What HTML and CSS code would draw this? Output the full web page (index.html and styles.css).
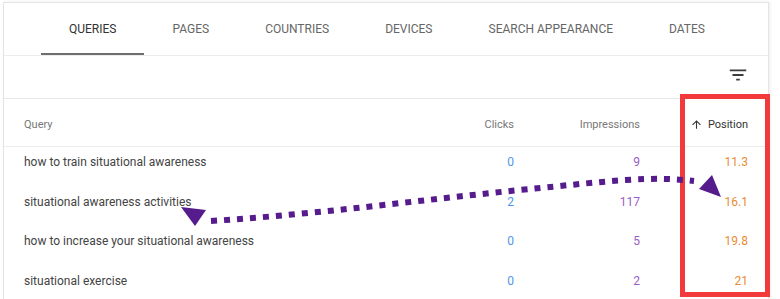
FILE: index.html
```html
<!DOCTYPE html>
<html>
<head>
<meta charset="utf-8">
<link rel="stylesheet" href="styles.css">
</head>
<body>
<div class="card">
  <div class="tabs">
    <div class="tab active">Queries</div>
    <div class="tab">Pages</div>
    <div class="tab">Countries</div>
    <div class="tab">Devices</div>
    <div class="tab">Search appearance</div>
    <div class="tab">Dates</div>
  </div>
  <div class="toolbar">
    <svg class="filter" viewBox="0 0 24 24" width="22" height="22"><path d="M10 18h4v-2h-4v2zM3 6v2h18V6H3zm3 7h12v-2H6v2z" fill="#3c3c3c"/></svg>
  </div>
  <div class="row head">
    <div class="c-query">Query</div>
    <div class="c-num">Clicks</div>
    <div class="c-num">Impressions</div>
    <div class="c-num sorted"><svg viewBox="0 0 24 24" width="13" height="13"><path d="M4 12l1.41 1.41L11 7.83V20h2V7.83l5.58 5.59L20 12l-8-8-8 8z" fill="#333"/></svg>Position</div>
  </div>
  <div class="row data">
    <div class="c-query">how to train situational awareness</div>
    <div class="c-num clicks">0</div>
    <div class="c-num impr">9</div>
    <div class="c-num pos">11.3</div>
  </div>
  <div class="row data">
    <div class="c-query">situational awareness activities</div>
    <div class="c-num clicks">2</div>
    <div class="c-num impr">117</div>
    <div class="c-num pos">16.1</div>
  </div>
  <div class="row data">
    <div class="c-query">how to increase your situational awareness</div>
    <div class="c-num clicks">0</div>
    <div class="c-num impr">5</div>
    <div class="c-num pos">19.8</div>
  </div>
  <div class="row data">
    <div class="c-query">situational exercise</div>
    <div class="c-num clicks">0</div>
    <div class="c-num impr">2</div>
    <div class="c-num pos">21</div>
  </div>
</div>
<div class="highlight"></div>
<svg class="annot" width="780" height="299" viewBox="0 0 780 299">
  <g fill="#561b8c" stroke="none">
    <polygon points="181,207 206,210 195,226"/>
    <polygon points="699,189 712,175 721,197"/>
  </g>
  <path d="M211 221 C 320 214, 420 200, 520 190 S 650 176, 694 181" fill="none" stroke="#561b8c" stroke-width="6" stroke-dasharray="6 7"/>
</svg>
</body>
</html>
```
FILE: styles.css
```css
html, body {
  margin: 0;
  padding: 0;
  background: #fff;
  width: 780px;
  height: 299px;
  overflow: hidden;
  font-family: Roboto, "Liberation Sans", sans-serif;
}
.card {
  margin: 2px 0 0 3px;
  width: 766px;
  height: 297px;
  overflow: hidden;
  box-sizing: border-box;
  border: 1px solid #e4e4e4;
  border-bottom: none;
  box-shadow: 1px 0 3px rgba(0,0,0,0.08);
  background: #fff;
}
.tabs {
  display: flex;
  padding-left: 37px;
  height: 52px;
  border-bottom: 1px solid #ececec;
}
.tab {
  padding: 0 28px;
  display: flex;
  align-items: center;
  font-size: 12px;
  text-transform: uppercase;
  color: #666;
  border-bottom: 2px solid transparent;
  box-sizing: border-box;
  padding-top: 2px;
}
.tab.active {
  color: #333;
  border-bottom-color: #6e6e6e;
}
.toolbar {
  height: 42px;
  border-bottom: 1px solid #e8e8e8;
  display: flex;
  justify-content: flex-end;
  align-items: flex-start;
  padding-right: 19px;
}
.filter {
  margin-top: 8px;
}
.row {
  display: grid;
  grid-template-columns: 1fr 100px 126px 108px;
  padding: 0 20px;
}
.row.head {
  height: 48px;
  align-items: center;
  border-bottom: 1px solid #ececec;
  font-size: 11px;
  color: #777;
  box-sizing: border-box;
  padding-top: 3px;
}
.row.data {
  height: 39.5px;
  box-sizing: border-box;
  padding-top: 8px;
  font-size: 12px;
  line-height: 14px;
  color: #444;
}
.c-num {
  text-align: right;
}
.sorted {
  color: #333;
  display: flex;
  justify-content: flex-end;
  align-items: center;
  gap: 5px;
}
.clicks { color: #4f95e8; }
.impr { color: #9a5cc8; }
.pos { color: #e98b35; }
.highlight {
  position: absolute;
  left: 680px;
  top: 94px;
  width: 90px;
  height: 203px;
  box-sizing: border-box;
  border: 5px solid #f23a3c;
}
.annot {
  position: absolute;
  left: 0;
  top: 0;
  pointer-events: none;
}
```
